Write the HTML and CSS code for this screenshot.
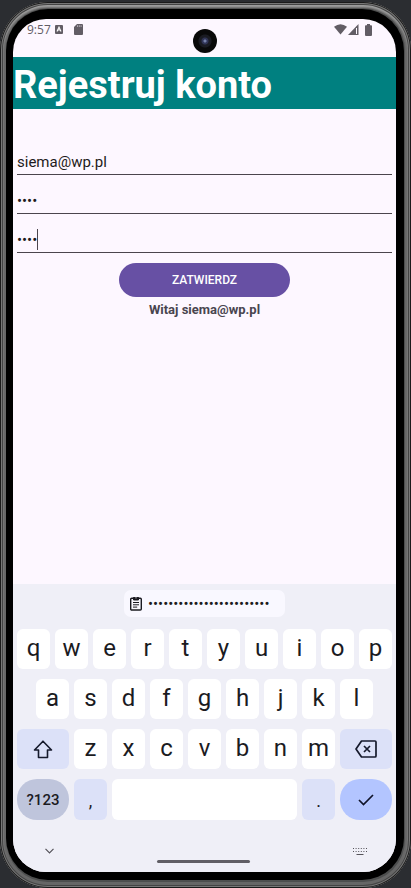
FILE: index.html
```html
<!DOCTYPE html>
<html lang="pl">
<head>
<meta charset="utf-8">
<meta name="viewport" content="width=device-width, initial-scale=1">
<title>Rejestruj konto</title>
<link rel="stylesheet" href="styles.css">
</head>
<body>
<div class="phone">
  <div class="rim">
  <div class="bezel">
    <div class="screen">
      <div class="status">
        <span class="clock">9:57</span>
        <svg class="status-a" width="8" height="9" viewBox="0 0 8 9"><rect width="8" height="9" rx="1" fill="#625d65"/><path d="M2 6.5 4 2 6 6.5M2.8 5H5.2" fill="none" stroke="#fff" stroke-width="1.1"/></svg>
        <svg class="status-sd" width="9" height="11" viewBox="0 0 9 11"><path d="M3 0H8Q9 0 9 1V10Q9 11 8 11H1Q0 11 0 10V3Z" fill="#625d65"/><path d="M3.500 1.200V3M5.300 1.200V3M7.100 1.200V3" stroke="#fdf7ff" stroke-width=".5"/></svg>
        <span class="spacer"></span>
        <svg width="13" height="11" viewBox="0 0 13 11"><path d="M0 2.800Q6.500-2.200 13 2.800L6.500 10.500Z" fill="#625d65"/></svg>
        <svg class="signal" width="11" height="11" viewBox="0 0 11 11"><path d="M0 11 10.500 0V11Z" fill="#625d65"/><path d="M8.500 4V10" stroke="#fdf7ff" stroke-width="1"/></svg>
        <svg class="battery" width="7" height="12" viewBox="0 0 7 12"><path d="M2 0H5V1.300H6.200Q7 1.300 7 2.200V11Q7 12 6 12H1Q0 12 0 11V2.200Q0 1.300 .8 1.300H2Z" fill="#625d65"/></svg>
        <span class="camera"></span>
      </div>
      <h1 class="title">Rejestruj konto</h1>
      <form class="form">
        <div class="field"><input type="text" value="siema@wp.pl" aria-label="Email"></div>
        <div class="field"><input type="password" value="abcd" aria-label="Hasło"></div>
        <div class="field"><input type="password" value="abcd" aria-label="Powtórz hasło"><span class="caret"></span></div>
        <button class="submit" type="button">ZATWIERDZ</button>
        <p class="message">Witaj siema@wp.pl</p>
      </form>
      <div class="keyboard">
        <button class="clip" type="button" aria-label="Wklej">
          <svg width="12" height="15" viewBox="0 0 12 15" fill="none" stroke="#1b1b21"><rect x=".7" y="2.200" width="10.600" height="11.800" rx="1" stroke-width="1.400"/><path d="M3.500 1.500H8.500V4H3.500Z" fill="#1b1b21" stroke-width="1"/><path d="M3 6.500H9M3 8.800H9M3 11.100H7.200" stroke-width="1"/><circle cx="6" cy="1.800" r=".6" fill="#fff" stroke="none"/></svg>
          <span>••••••••••••••••••••••••</span>
        </button>
        <div class="row row-top">
          <button type="button">q</button><button type="button">w</button><button type="button">e</button><button type="button">r</button><button type="button">t</button><button type="button">y</button><button type="button">u</button><button type="button">i</button><button type="button">o</button><button type="button">p</button>
        </div>
        <div class="row row-home">
          <button type="button">a</button><button type="button">s</button><button type="button">d</button><button type="button">f</button><button type="button">g</button><button type="button">h</button><button type="button">j</button><button type="button">k</button><button type="button">l</button>
        </div>
        <div class="row row-shift">
          <button type="button" class="soft" aria-label="Shift"><svg width="20" height="19" viewBox="0 0 20 19"><path d="M10 1.200 1.500 10H5.500V17.500H14.500V10H18.500Z" fill="none" stroke="#161a2c" stroke-width="1.600" stroke-linejoin="round"/></svg></button>
          <button type="button">z</button><button type="button">x</button><button type="button">c</button><button type="button">v</button><button type="button">b</button><button type="button">n</button><button type="button">m</button>
          <button type="button" class="soft" aria-label="Backspace"><svg width="22" height="18" viewBox="0 0 22 18" fill="none" stroke="#161a2c" stroke-width="1.700" stroke-linejoin="round"><path d="M6.500 1H20Q21 1 21 2V16Q21 17 20 17H6.500L1 9Z"/><path d="M9 6 15 12M15 6 9 12"/></svg></button>
        </div>
        <div class="row row-space">
          <button type="button" class="mode">?123</button>
          <button type="button" class="soft mark">,</button>
          <button type="button" aria-label="Spacja"></button>
          <button type="button" class="soft mark">.</button>
          <button type="button" class="enter" aria-label="Gotowe"><svg width="16" height="12" viewBox="0 0 16 12"><path d="M1 6 5.500 10.500 15 1" fill="none" stroke="#10142a" stroke-width="1.700"/></svg></button>
        </div>
        <div class="nav">
          <svg width="9" height="6" viewBox="0 0 9 6"><path d="M.5 .8 4.500 4.800 8.500 .8" fill="none" stroke="#55535a" stroke-width="1.200"/></svg>
          <span class="handle"></span>
          <svg width="14" height="8" viewBox="0 0 14 8" stroke="#55535a"><path d="M0 1.500H14M0 4.500H14" stroke-width="1" stroke-dasharray="1 1.600"/><path d="M3.500 7.500H10.500" stroke-width="1"/></svg>
        </div>
      </div>
    </div>
  </div>
  </div>
</div>
</body>
</html>
```
FILE: styles.css
```css
* {
  box-sizing: border-box;
}

body {
  margin: 0;
  background: #2b2d31;
  font-family: Roboto, "Liberation Sans", sans-serif;
  color: #1d1b20;
}

button,
input {
  font: inherit;
  color: inherit;
  border: 0;
  padding: 0;
  margin: 0;
}

svg {
  flex: none;
}

.phone {
  display: flex;
  min-height: 100vh;
  padding: 2px 0 0;
}

.rim {
  flex: 1;
  display: flex;
  padding: 7px 7px 8px 6px;
  border-radius: 48px;
  background: #4d4e4e;
  box-shadow: inset 0 0 0 1px #1b1b1b, inset 0 0 0 2px #777, inset 0 0 0 3px #444, inset 0 2px 2px 3px #a0a0a0, inset 0 0 0 6px #666;
}

.bezel {
  flex: 1;
  display: flex;
  padding: 10px 8px 8px 7px;
  border-radius: 42px;
  background: #000;
}

.screen {
  flex: 1;
  min-width: 0;
  display: flex;
  flex-direction: column;
  overflow: hidden;
  border-radius: 33px;
  background: #fdf7ff;
}

.status {
  position: relative;
  display: flex;
  align-items: flex-start;
  height: 38px;
  padding: 5px 24px 0 14px;
}

.clock {
  margin-top: -2px;
  margin-right: 4px;
  font: 12px/16px "Open Sans", sans-serif;
  color: #625d65;
}

.status-a {
  margin-top: 1px;
  margin-right: 11px;
}

.spacer {
  flex: 1;
}

.signal {
  margin-left: 1px;
}

.battery {
  margin-left: 6px;
}

.camera {
  position: absolute;
  top: 10px;
  left: 50%;
  width: 24px;
  height: 24px;
  margin-left: -12px;
  border-radius: 50%;
  background: radial-gradient(circle, #7580a8 0 1px, #303456 2px 3px, #1a1b22 4px 6px, #090909 7px);
}

.title {
  margin: 0;
  padding-top: 4px;
  height: 52px;
  background: #008080;
  color: #fff;
  font-size: 38px;
  line-height: 48px;
  font-weight: 700;
  white-space: nowrap;
}

.form {
  flex: 1;
  display: flex;
  flex-direction: column;
  padding: 27px 4px 0;
}

.field {
  position: relative;
  display: flex;
  height: 39px;
  padding-top: 14px;
  border-bottom: 1px solid #4b454d;
}

.field input {
  flex: 1;
  min-width: 0;
  background: none;
  outline: none;
  font-size: 15px;
  line-height: 24px;
}

.caret {
  position: absolute;
  left: 20px;
  bottom: 2px;
  width: 1px;
  height: 21px;
  background: #4b454d;
}

.submit {
  align-self: center;
  width: 171px;
  height: 34px;
  margin-top: 10px;
  border-radius: 17px;
  background: #6750a4;
  color: #fff;
  font-size: 12px;
  font-weight: 500;
}

.message {
  margin: 5px 0;
  text-align: center;
  color: #49454f;
  font-size: 13px;
  line-height: 16px;
  font-weight: 700;
}

.keyboard {
  display: flex;
  flex-direction: column;
  gap: 10px;
  padding: 6px 4px 0;
  background: #efeff7;
}

.clip {
  align-self: center;
  display: flex;
  align-items: center;
  gap: 6px;
  width: 161px;
  height: 27px;
  margin-bottom: 2px;
  padding-left: 6px;
  border-radius: 7px;
  background: #f9f8ff;
  font-size: 15px;
}

.row {
  display: grid;
  gap: 5px;
}

.row button {
  display: flex;
  align-items: center;
  justify-content: center;
  height: 40px;
  padding-bottom: 2px;
  border-radius: 6px;
  background: #fff;
  color: #1b1b1f;
  font-size: 24px;
}

.row .soft {
  padding: 0;
  background: #dce1f8;
}

.row-top {
  grid-template-columns: repeat(10, 1fr);
}

.row-home {
  grid-template-columns: repeat(9, 1fr);
  padding: 0 19px;
}

.row-shift {
  grid-template-columns: 52fr repeat(7, 33fr) 52fr;
}

.row-space {
  grid-template-columns: 52fr 33fr 185fr 33fr 52fr;
}

.row-space button {
  height: 41px;
}

.row .mode {
  padding: 0;
  border-radius: 20px;
  background: #bfc5dc;
  font-size: 15px;
  font-weight: 500;
}

.row .mark {
  padding-top: 2px;
  font-size: 18px;
}

.row .enter {
  padding: 0;
  border-radius: 20px;
  background: #b3c5ff;
}

.nav {
  display: flex;
  align-items: center;
  justify-content: space-between;
  height: 42px;
  padding: 0 25px 0 28px;
}

.handle {
  width: 93px;
  height: 3px;
  margin-top: 20px;
  border-radius: 2px;
  background: #605e65;
}
```
